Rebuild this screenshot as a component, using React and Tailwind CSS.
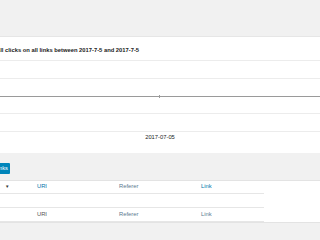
export default function App() {
  const font = "font-['Liberation_Sans',Arial,sans-serif]";
  return (
    <div className={`w-[320px] h-[240px] overflow-hidden bg-[#f1f1f1] ${font}`}>
      <div className="h-[36px]" />
      <div className="h-px bg-[#e6e6e6]" />
      <div className="bg-white h-[116px] flex flex-col">
        <div className="h-[23px] flex items-center pt-[4px]">
          <span className="-ml-[4px] text-[5.8px] font-bold text-[#222] whitespace-nowrap leading-none">
            All clicks on all links between 2017-7-5 and 2017-7-5
          </span>
        </div>
        <svg width="320" height="72" className="block shrink-0">
          <line x1="0" y1="0.5" x2="320" y2="0.5" stroke="#ececec" strokeWidth="1" />
          <line x1="0" y1="18.5" x2="320" y2="18.5" stroke="#ececec" strokeWidth="1" />
          <line x1="0" y1="36.5" x2="320" y2="36.5" stroke="#9a9a9a" strokeWidth="1" />
          <line x1="159.5" y1="35" x2="159.5" y2="38" stroke="#9a9a9a" strokeWidth="1" />
          <line x1="0" y1="53.5" x2="320" y2="53.5" stroke="#ececec" strokeWidth="1" />
          <line x1="0" y1="71.5" x2="320" y2="71.5" stroke="#ececec" strokeWidth="1" />
        </svg>
        <div className="h-[10px] flex items-center justify-center pt-[2px]">
          <span className="text-[5.8px] text-[#222] leading-none">2017-07-05</span>
        </div>
        <div className="flex-1" />
      </div>
      <div className="h-[10px]" />
      <div className="h-[11px] w-[10px] bg-[#0085ba] rounded-r-[1px] overflow-hidden flex items-center justify-end pr-[2px]">
        <span className="text-[5.8px] text-white leading-none whitespace-nowrap shrink-0">Links</span>
      </div>
      <div className="h-[6px]" />
      <div className="bg-white border-t border-b border-[#e3e3e3] text-[5.8px] leading-none">
        <div className="w-[264px] flex h-[13px] items-center border-b border-[#e6e6e6]">
          <div className="w-[34px] pl-[5px] text-[#333] text-[4.5px]">▼</div>
          <div className="w-[82px] pl-[3px] text-[#0073aa]">URI</div>
          <div className="w-[82px] pl-[3px] text-[#5a7890]">Referer</div>
          <div className="w-[66px] pl-[3px] text-[#0073aa]">Link</div>
        </div>
        <div className="w-[264px] h-[14px] border-b border-[#e6e6e6]" />
        <div className="w-[264px] flex h-[14px] items-center border-b border-[#e6e6e6]">
          <div className="w-[34px]" />
          <div className="w-[82px] pl-[3px] text-[#555]">URI</div>
          <div className="w-[82px] pl-[3px] text-[#5a7890]">Referer</div>
          <div className="w-[66px] pl-[3px] text-[#5a7890]">Link</div>
        </div>
      </div>
    </div>
  );
}
